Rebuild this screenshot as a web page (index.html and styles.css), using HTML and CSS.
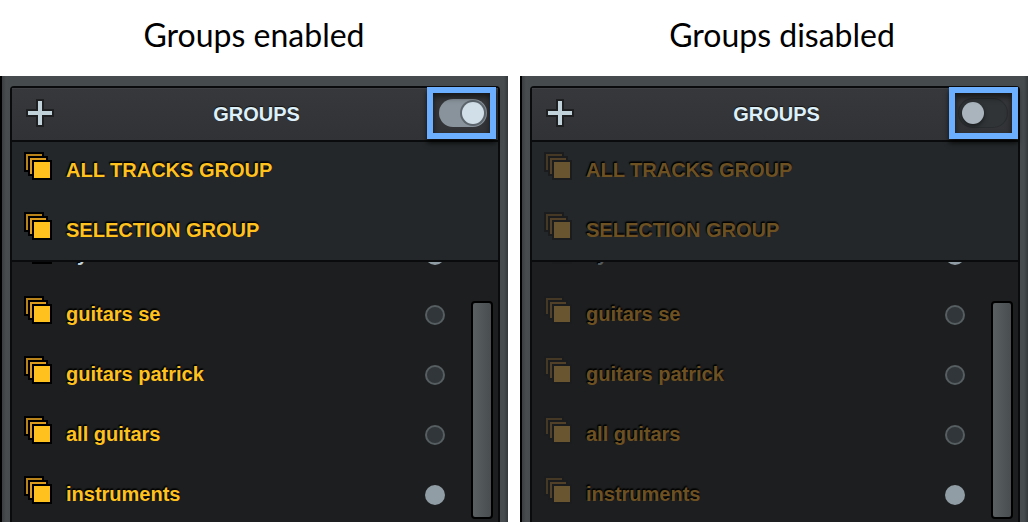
FILE: index.html
```
<!DOCTYPE html>
<html lang="en">
<head>
<meta charset="utf-8">
<title>Groups</title>
<link rel="stylesheet" href="styles.css">
</head>

<body>
<svg class="defs" width="0" height="0">
    <symbol id="stack" viewBox="0 0 28 28">
        <path class="edge" d="M0 0h20v20H0z"/><path class="back" d="M2 2h16v16H2z"/>
        <path class="edge" d="M4 4h20v20H4z"/><path class="mid" d="M6 6h16v16H6z"/>
        <path class="edge" d="M8 8h20v20H8z"/><path class="front" d="M10 10h16v16H10z"/>
    </symbol>
    <symbol id="plus" viewBox="0 0 28 28">
        <path fill="#1d1f21" d="M10 0h8v10h10v8H18v10h-8V18H0v-8h10z"/>
        <path fill="#c2d2da" d="M12 2h4v10h10v4H16v10h-4V16H2v-4h10z"/>
    </symbol>
</svg>
<main class="columns">
    <section class="column">
        <h1>Groups enabled</h1>
        <div class="frame">
            <div class="panel">
                <header>
                    <button class="add" aria-label="Add group"><svg><use href="#plus"/></svg></button>
                    <h2>GROUPS</h2>
                    <label class="switch"><input type="checkbox" aria-label="Groups" checked></label>
                </header>
                <div class="fixed">
                    <button class="row"><svg><use href="#stack"/></svg>ALL TRACKS GROUP</button>
                    <button class="row"><svg><use href="#stack"/></svg>SELECTION GROUP</button>
                </div>
                <div class="scroll">
                    <div class="list">
                        <label class="row idle"><svg><use href="#stack"/></svg><span>synths</span><input type="checkbox" checked></label>
                        <label class="row"><svg><use href="#stack"/></svg><span>guitars se</span><input type="checkbox"></label>
                        <label class="row"><svg><use href="#stack"/></svg><span>guitars patrick</span><input type="checkbox"></label>
                        <label class="row"><svg><use href="#stack"/></svg><span>all guitars</span><input type="checkbox"></label>
                        <label class="row"><svg><use href="#stack"/></svg><span>instruments</span><input type="checkbox" checked></label>
                    </div>
                    <div class="thumb"></div>
                </div>
            </div>
        </div>
    </section>
    <section class="column off">
        <h1>Groups disabled</h1>
        <div class="frame">
            <div class="panel">
                <header>
                    <button class="add" aria-label="Add group"><svg><use href="#plus"/></svg></button>
                    <h2>GROUPS</h2>
                    <label class="switch"><input type="checkbox" aria-label="Groups"></label>
                </header>
                <div class="fixed">
                    <button class="row"><svg><use href="#stack"/></svg>ALL TRACKS GROUP</button>
                    <button class="row"><svg><use href="#stack"/></svg>SELECTION GROUP</button>
                </div>
                <div class="scroll">
                    <div class="list">
                        <label class="row idle"><svg><use href="#stack"/></svg><span>synths</span><input type="checkbox" checked></label>
                        <label class="row"><svg><use href="#stack"/></svg><span>guitars se</span><input type="checkbox"></label>
                        <label class="row"><svg><use href="#stack"/></svg><span>guitars patrick</span><input type="checkbox"></label>
                        <label class="row"><svg><use href="#stack"/></svg><span>all guitars</span><input type="checkbox"></label>
                        <label class="row"><svg><use href="#stack"/></svg><span>instruments</span><input type="checkbox" checked></label>
                    </div>
                    <div class="thumb"></div>
                </div>
            </div>
        </div>
    </section>
</main>
</body>

</html>
```
FILE: styles.css
```
*{box-sizing:border-box;}
body,h1,h2{margin:0;padding:0;}
body{background:#fff;font-family:"Liberation Sans",Arial,sans-serif;}
button{border:0;background:none;padding:0;font:inherit;cursor:pointer;}
input{appearance:none;margin:0;cursor:pointer;}
.defs{position:absolute;}

.columns{display:flex;gap:12px;height:100vh;overflow:hidden;}
.column{
    --front:#ffc11e;
    --mid:#dc9c1e;
    --back:#b9831b;
    --edge:#000;
    --text:#ffc11e;
    --idle:#c2d2da;
    flex:1;
    min-width:0;
    display:flex;
    flex-direction:column;
}
.off{
    --front:#69552f;
    --mid:#524128;
    --back:#453825;
    --edge:#1b1c1d;
    --text:#6e5122;
    --idle:#54595c;
}
h1{height:76px;line-height:70px;text-align:center;font-family:Lato,"Open Sans",sans-serif;font-size:32px;font-weight:400;color:#000;}
.off h1{padding-left:16px;}

.frame{
    flex:1;
    min-height:0;
    display:flex;
    padding:10px 8px 0;
    border-left:2px solid #000;
    background:linear-gradient(90deg,#3b3e40,#484c4e 4px,#464c4e 8px,#464c4e calc(100% - 4px),#33383a);
}
.panel{flex:1;min-width:0;display:flex;flex-direction:column;border:2px solid #0a0b0c;border-bottom:0;border-radius:4px 4px 0 0;background:#1d1e1f;}

header{
    display:grid;
    grid-template-columns:1fr auto 1fr;
    align-items:center;
    height:54px;
    padding:0 11px 2px 14px;
    border-bottom:2px solid #0a0b0c;
    background:linear-gradient(#37383b,#313236);
    box-shadow:inset 0 1px #404144;
}
.add{justify-self:start;width:28px;height:28px;}
.add svg,.row svg{display:block;width:28px;height:28px;}
h2{padding-top:2px;font-size:20px;line-height:24px;color:#def0fa;text-shadow:0 -1px 1px #111;}

/* toggle with the blue callout round it */
.switch{position:relative;justify-self:end;display:block;height:28px;}
.switch::after{content:"";position:absolute;z-index:1;inset:-12px -9px -12px -12px;border:6px solid #6caeff;box-shadow:0 4px 5px rgba(0,0,0,.7),inset 0 4px 6px rgba(0,0,0,.6);pointer-events:none;}
.off .switch::after{inset:-12px -11px -12px -10px;}
.switch input{display:flex;align-items:center;width:48px;height:28px;padding:0 3px;border-radius:14px;background:#303437;box-shadow:0 0 0 1px #292c2e;}
.switch input::before{content:"";width:22px;height:22px;border-radius:50%;background:#a9b4bd;box-shadow:0 2px 4px rgba(0,0,0,.5);}
.switch input:checked{justify-content:flex-end;background:#89939b;box-shadow:none;}
.switch input:checked::before{background:#d1dfe9;box-shadow:0 0 0 2px #5c656c;}

.fixed{height:120px;border-bottom:2px solid #0a0b0c;background:#232729;}
.row{
    display:flex;
    align-items:center;
    width:100%;
    height:60px;
    padding:0 14px 4px 12px;
    gap:14px;
    font-size:20px;
    font-weight:700;
    line-height:24px;
    color:var(--text);
    text-align:left;
    text-shadow:-1px -1px 1px #000,0 -2px 1px rgba(0,0,0,.6);
}
.row svg{margin-bottom:8px;}
.edge{fill:var(--edge);}
.back{fill:var(--back);}
.mid{fill:var(--mid);}
.front{fill:var(--front);}
.idle{--front:#1b1c1d;--mid:#1b1c1d;--back:#1b1c1d;color:var(--idle);}

.scroll{flex:1;min-height:0;display:flex;overflow:hidden;}
/* the list is scrolled part of the way through its first row */
.list{flex:1;min-width:0;margin-top:-36px;}
.row span{flex:1;}
.row input{width:20px;height:20px;margin-top:2px;border:2px solid #565e62;border-radius:50%;background:#303639;}
.row input:checked{border:0;background:#919da4;}
.thumb{width:22px;height:218px;margin:39px 5px 0 12px;border:2px solid #000;border-radius:4px;background:linear-gradient(90deg,#5a5f61,#484d50);}
```
